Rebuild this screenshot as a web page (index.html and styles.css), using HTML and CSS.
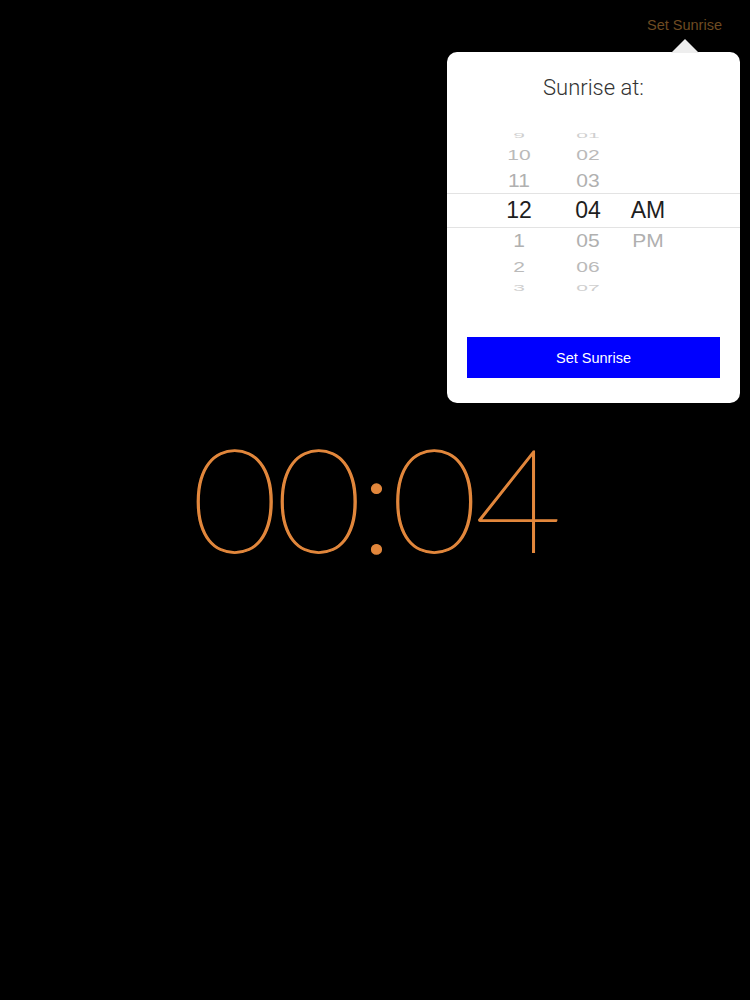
FILE: index.html
```html
<!DOCTYPE html>
<html>
<head>
<meta charset="utf-8">
<link rel="stylesheet" href="styles.css">
</head>
<body>
<div class="screen">
  <header class="topbar">
    <span class="top-action">Set Sunrise</span>
  </header>
  <main class="clock-area">
    <div class="clock">00:04</div>
  </main>

  <div class="popover">
    <div class="arrow"></div>
    <div class="pop-title">Sunrise at:</div>
    <div class="picker">
      <div class="sel-band"></div>
      <div class="col col-h">
        <div class="r r9">9</div>
        <div class="r r10">10</div>
        <div class="r r11">11</div>
        <div class="r rsel">12</div>
        <div class="r r1">1</div>
        <div class="r r2">2</div>
        <div class="r r3">3</div>
      </div>
      <div class="col col-m">
        <div class="r r9">01</div>
        <div class="r r10">02</div>
        <div class="r r11">03</div>
        <div class="r rsel">04</div>
        <div class="r r1">05</div>
        <div class="r r2">06</div>
        <div class="r r3">07</div>
      </div>
      <div class="col col-p">
        <div class="r r9"></div>
        <div class="r r10"></div>
        <div class="r r11"></div>
        <div class="r rsel">AM</div>
        <div class="r r1">PM</div>
        <div class="r r2"></div>
        <div class="r r3"></div>
      </div>
    </div>
    <button class="set-btn">Set Sunrise</button>
  </div>
</div>
</body>
</html>
```
FILE: styles.css
```css
html, body {
  margin: 0;
  padding: 0;
  background: #000;
}
.screen {
  position: relative;
  width: 750px;
  height: 1000px;
  background: #000;
  overflow: hidden;
}
.topbar {
  display: flex;
  justify-content: flex-end;
  padding: 15px 28px 0 0;
  height: 20px;
}
.top-action {
  font-family: "Liberation Sans", Arial, sans-serif;
  font-size: 14.5px;
  color: #6e4b22;
  line-height: 20px;
}
.clock-area {
  display: flex;
  justify-content: center;
  padding-top: 390px;
}
.clock {
  font-family: Lato, Roboto, sans-serif;
  font-weight: 200;
  font-size: 145px;
  line-height: 145px;
  color: #e2873c;
  -webkit-text-stroke: 1.3px #e2873c;
  letter-spacing: -3.3px;
  transform: scaleX(1.04);
  white-space: nowrap;
}

/* popover */
.popover {
  position: absolute;
  left: 447px;
  top: 52px;
  width: 293px;
  height: 351px;
  background: #fff;
  border-radius: 10px;
  display: flex;
  flex-direction: column;
  align-items: stretch;
}
.arrow {
  position: absolute;
  top: -13px;
  left: 224px;
  width: 0;
  height: 0;
  border-left: 14px solid transparent;
  border-right: 14px solid transparent;
  border-bottom: 14px solid #eeeeee;
}
.pop-title {
  font-family: Roboto, "Liberation Sans", sans-serif;
  font-weight: 300;
  font-size: 22px;
  color: #333;
  text-align: center;
  margin-top: 23px;
  height: 26px;
  line-height: 26px;
}
.picker {
  position: relative;
  margin-top: 27px;
  height: 172px;
  display: flex;
  padding-left: 42px;
  gap: 9px;
}
.sel-band {
  position: absolute;
  left: 0;
  right: 0;
  top: 65px;
  height: 35px;
  border-top: 1px solid #e3e3e3;
  border-bottom: 1px solid #e3e3e3;
  box-sizing: border-box;
}
.col {
  width: 60px;
  display: flex;
  flex-direction: column;
}
.col-p {
  margin-left: -9px;
}
.r {
  font-family: "Liberation Sans", Arial, sans-serif;
  font-size: 21px;
  text-align: center;
  color: #b3b3b3;
  display: flex;
  align-items: center;
  justify-content: center;
}
.r9  { height: 15px; transform: scaleY(0.38); color: #cfcfcf; }
.r10 { height: 24px; transform: scaleY(0.7);  color: #bababa; }
.r11 { height: 27px; transform: scaleY(0.86); color: #b0b0b0; }
.rsel { height: 33px; font-size: 23px; color: #1e1e1e; }
.r1  { height: 28px; transform: scaleY(0.84); color: #b0b0b0; }
.r2  { height: 24px; transform: scaleY(0.66); color: #bababa; }
.r3  { height: 18px; transform: scaleY(0.4);  color: #cfcfcf; }

.set-btn {
  margin: 37px 20px 0 20px;
  height: 41px;
  background: #0000ff;
  border: none;
  border-radius: 0;
  color: #fff;
  font-family: "Liberation Sans", Arial, sans-serif;
  font-size: 14.5px;
  padding: 0;
}
```
